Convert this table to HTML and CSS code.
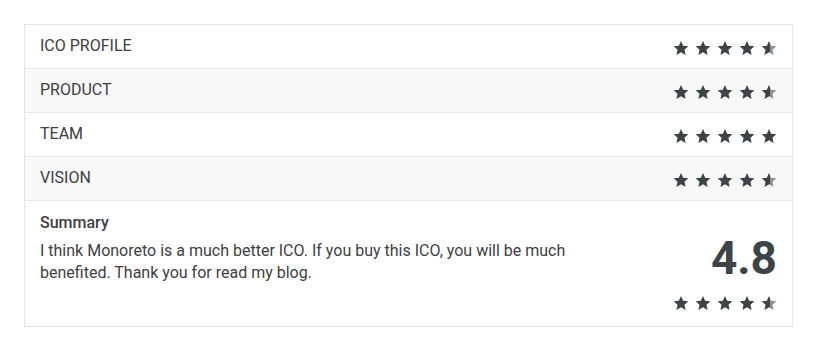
FILE: index.html
```html
<!DOCTYPE html>
<html lang="en">
<head>
    <meta charset="UTF-8">
    <meta name="viewport" content="width=device-width, initial-scale=1.0">
    <title>ICO Rating</title>
    <link rel="stylesheet" href="styles.css">
</head>
<body>
    <svg width="0" height="0" class="defs">
        <defs>
            <symbol id="star" viewBox="0 0 24 24">
                <path d="M12 1.5l3.2 7.1 7.8.8-5.8 5.3 1.7 7.7L12 18.4l-6.9 4 1.7-7.7L1 9.4l7.8-.8z"/>
            </symbol>
            <linearGradient id="half">
                <stop offset="55%" stop-color="#3c4448"/>
                <stop offset="55%" stop-color="#8c9194"/>
            </linearGradient>
        </defs>
    </svg>

    <div class="rating-box">
        <div class="rating-row">
            <span class="label">ICO PROFILE</span>
            <div class="stars" data-score="4.5"></div>
        </div>
        <div class="rating-row">
            <span class="label">PRODUCT</span>
            <div class="stars" data-score="4.5"></div>
        </div>
        <div class="rating-row">
            <span class="label">TEAM</span>
            <div class="stars" data-score="5"></div>
        </div>
        <div class="rating-row">
            <span class="label">VISION</span>
            <div class="stars" data-score="4.5"></div>
        </div>

        <div class="summary">
            <div class="summary-text">
                <h3>Summary</h3>
                <p>I think Monoreto is a much better ICO. If you buy this ICO, you will be much benefited. Thank you for read my blog.</p>
            </div>
            <div class="score">
                <div class="score-value">4.8</div>
                <div class="stars" data-score="4.5"></div>
            </div>
        </div>
    </div>

    <script>
        // draw stars for each rating
        document.querySelectorAll('.stars').forEach(function(el) {
            const score = parseFloat(el.dataset.score);
            let html = '';
            for (let i = 1; i <= 5; i++) {
                const cls = (score < i && score > i - 1) ? 'star half' : 'star';
                html += `<svg class="${cls}" viewBox="0 0 24 24"><use href="#star"/></svg>`;
            }
            el.innerHTML = html;
        });
    </script>
</body>
</html>
```

FILE: styles.css
```css
body {
    font-family: Roboto, 'Liberation Sans', sans-serif;
    margin: 0;
    padding: 24px;
    background-color: #fff;
    color: #404040;
}

.defs {
    position: absolute;
}

.rating-box {
    border: 1px solid #e5e5e5;
    width: 767px;
}

.rating-row {
    display: flex;
    align-items: center;
    justify-content: space-between;
    height: 43px;
    padding: 0 15px;
    border-bottom: 1px solid #e8e8e8;
}

.rating-row:nth-child(even) {
    background-color: #f8f8f8;
}

.label {
    font-size: 16px;
    margin-top: -2px;
}

.stars {
    display: flex;
    gap: 6px;
    margin-top: 2px;
}

.star {
    width: 16px;
    height: 16px;
    fill: #3c4448;
}

.star.half {
    fill: url(#half);
}

.summary {
    display: flex;
    justify-content: space-between;
    padding: 12px 15px 15px 15px;
}

.summary-text {
    width: 560px;
}

.summary-text h3 {
    font-size: 16px;
    font-weight: 500;
    line-height: 20px;
    margin: 0 0 7px 0;
}

.summary-text p {
    font-size: 16px;
    line-height: 22px;
    margin: 0;
}

.score {
    display: flex;
    flex-direction: column;
    align-items: flex-end;
    padding-top: 18px;
}

.score-value {
    font-size: 46px;
    font-weight: 700;
    color: #3c4448;
    line-height: 54px;
    margin-bottom: 8px;
}
```
